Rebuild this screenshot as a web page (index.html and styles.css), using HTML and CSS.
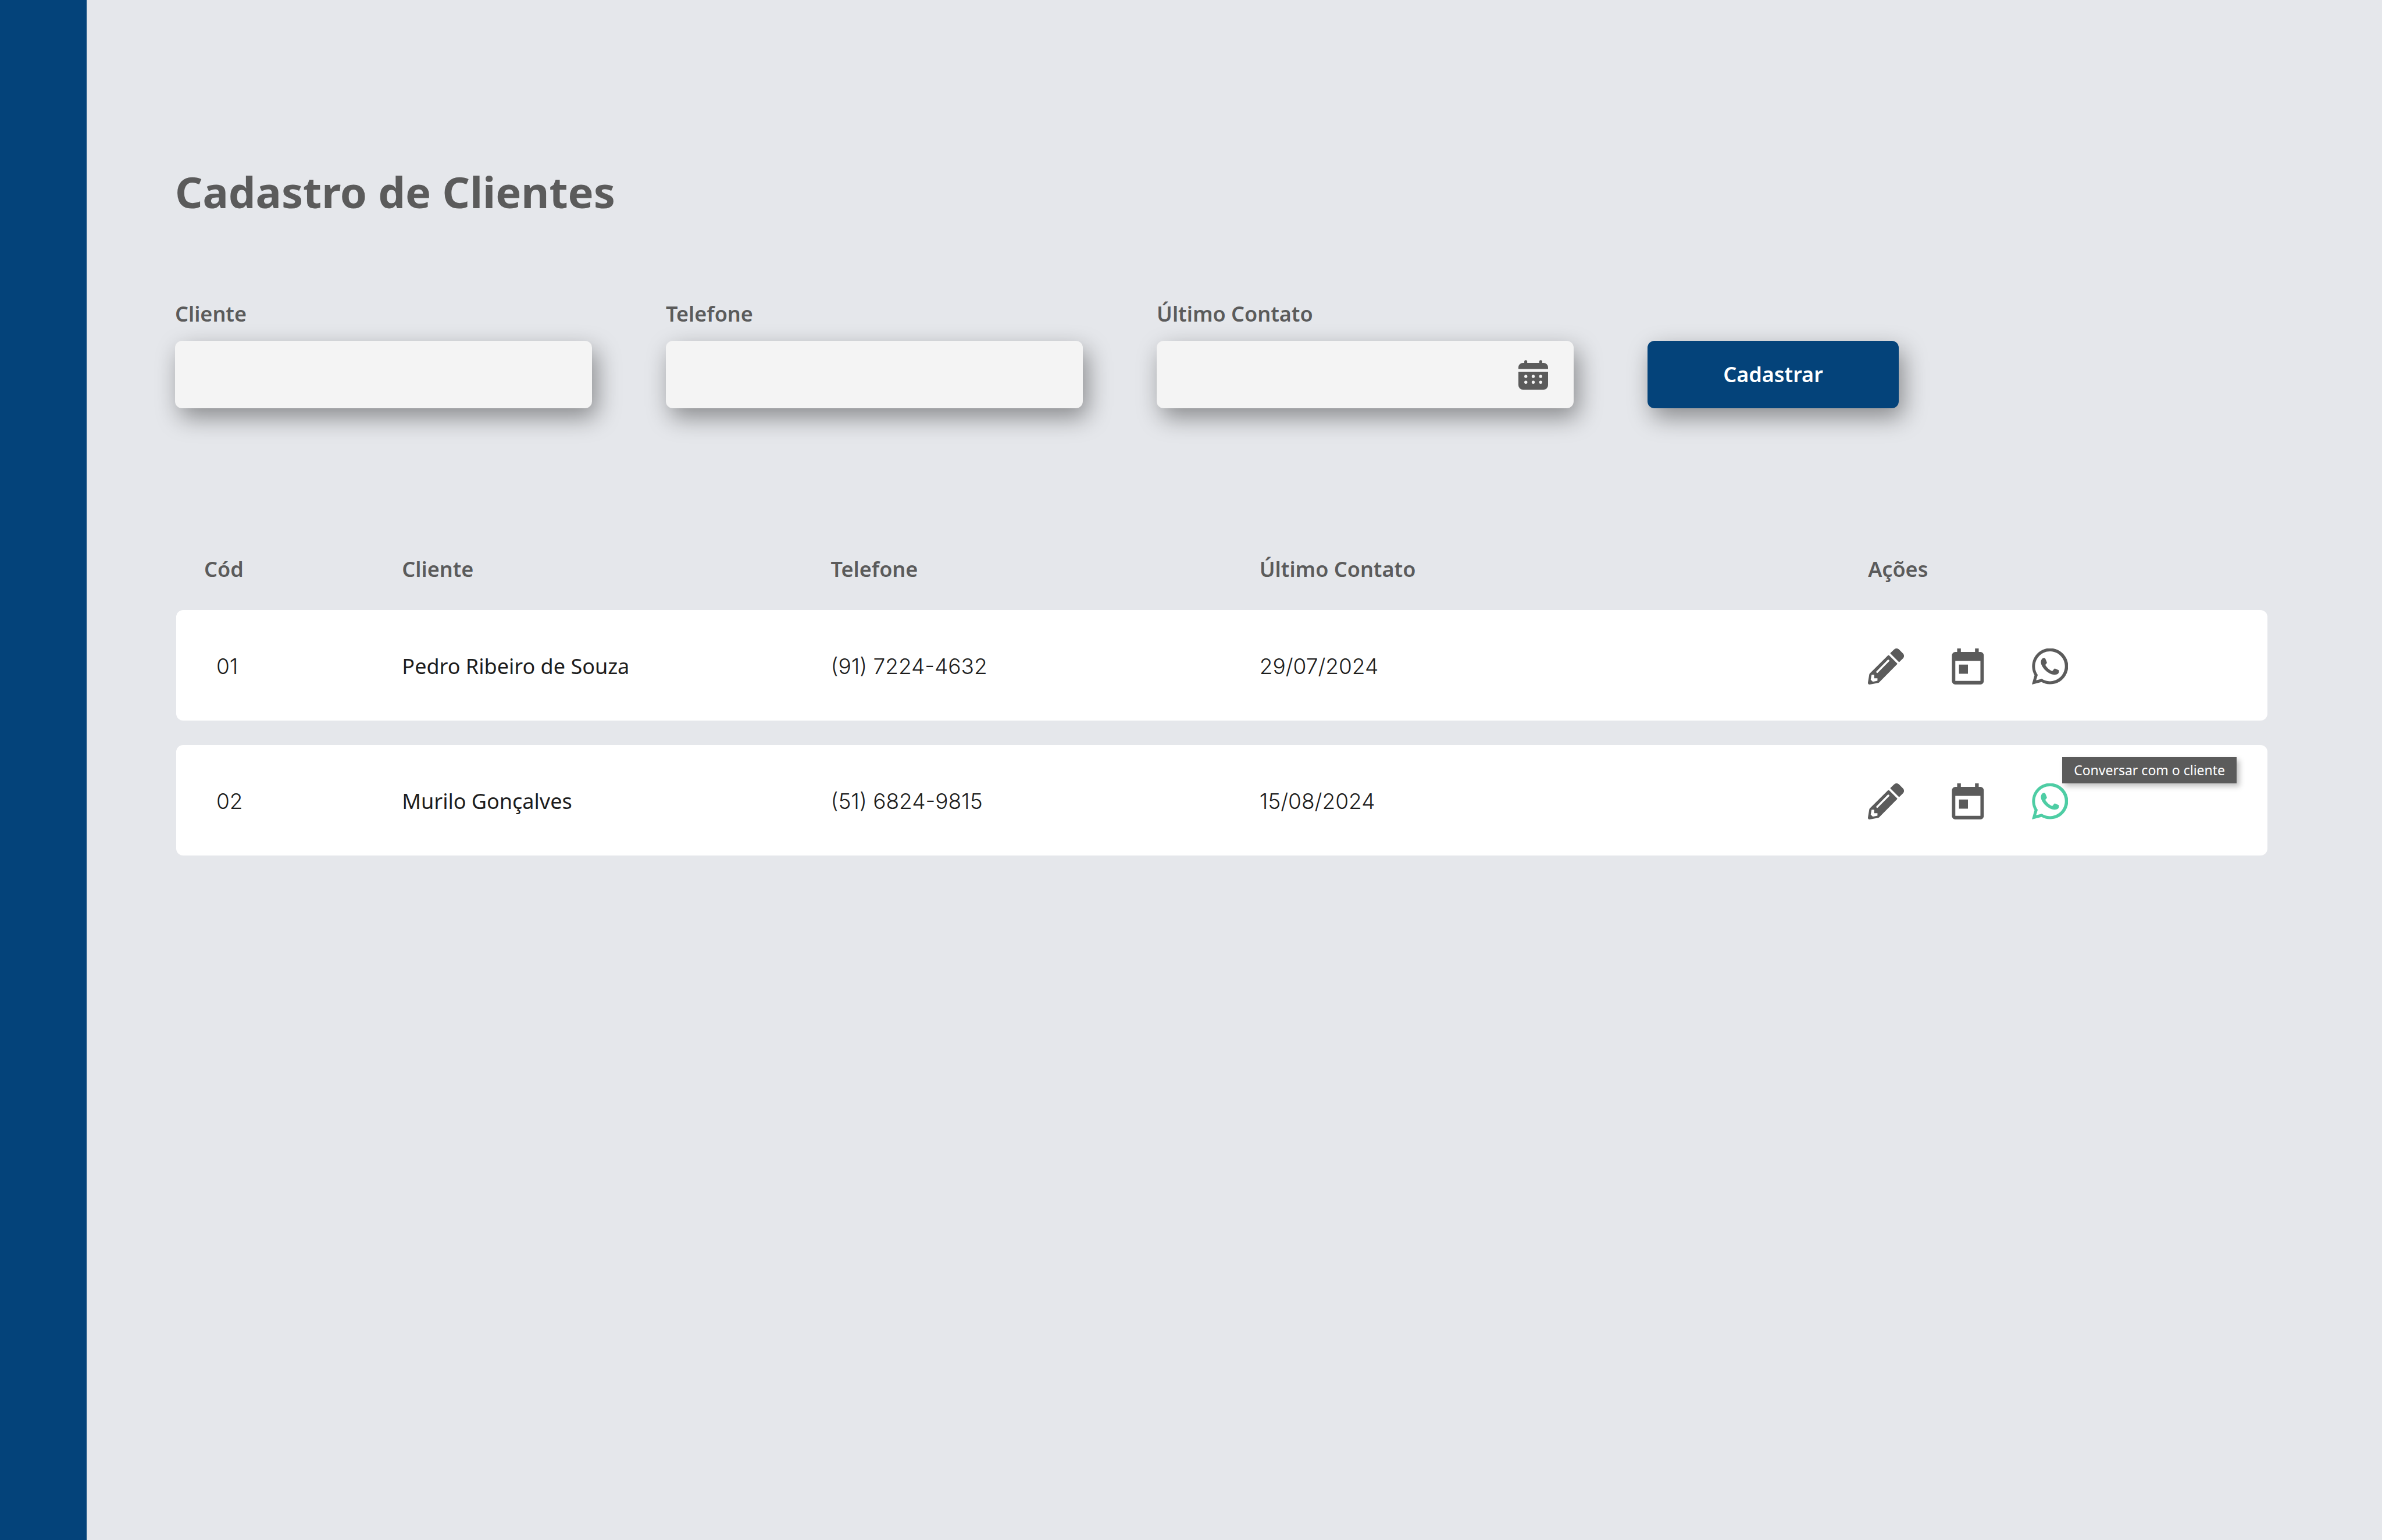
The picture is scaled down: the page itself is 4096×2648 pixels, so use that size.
FILE: index.html
```html
<!DOCTYPE html>
<html lang="pt-BR">
<head>
  <meta charset="utf-8">
  <meta name="viewport" content="width=device-width, initial-scale=1">
  <title>Cadastro de Clientes</title>
  <link rel="stylesheet" href="styles.css">
</head>
<body>
  <svg class="sprite" aria-hidden="true">
    <symbol id="icon-edit" viewBox="0 0 234 234">
      <path d="M147 34Q144 31 147 28L170 7Q185 -7 201 6L228 33Q241 48 228 64L206 86Q203 89 199 86Z"/>
      <path fill-rule="evenodd" d="M130 45Q134 41 138 45L189 96Q192 100 189 103L76 217Q72 222 66 224L12 234Q-1 235 0 222L9 168Q10 164 14 160ZM128 75L56 148A6 6 0 0 0 65 157L137 84A6 6 0 0 0 128 75ZM24 171L18 203L32 216L62 209L62 193L41 193L41 171Z"/>
    </symbol>
    <symbol id="icon-event" viewBox="-13 0 234 234">
      <path fill-rule="evenodd" d="M34 0H58V23H150V0H174V23H185A22 22 0 0 1 207 45V212A22 22 0 0 1 185 234H22A22 22 0 0 1 0 212V45A22 22 0 0 1 22 23H34ZM22 81V210H185V81ZM46 105H104V164H46Z"/>
    </symbol>
    <symbol id="icon-whatsapp" viewBox="0 0 234 234">
      <path fill-rule="evenodd" d="M0 234L17 174A117 117 0 1 1 62 218ZM27 207L64 197A97 97 0 1 0 38 172Z"/>
      <path d="M71 63Q58 72 58 90Q60 112 82 137Q112 168 146 171Q176 170 176 146Q176 143 173 141L150 130Q147 129 145 132L134 145Q132 147 129 146Q104 134 88 109Q87 106 89 104L96 96Q98 93 97 90L87 66Q86 62 82 62Q75 61 71 63Z"/>
    </symbol>
    <symbol id="icon-calendar" viewBox="0 0 192 192">
      <path d="M38 19V10A9 9 0 0 1 57 10V19H135V10A9 9 0 0 1 154 10V19H163A29 29 0 0 1 192 48V58H0V48A29 29 0 0 1 29 19Z"/>
      <path fill-rule="evenodd" d="M0 77H192V163A29 29 0 0 1 163 192H29A29 29 0 0 1 0 163ZM38 106a10 10 0 1 0 20 0a10 10 0 1 0 -20 0ZM86 106a10 10 0 1 0 20 0a10 10 0 1 0 -20 0ZM134 106a10 10 0 1 0 20 0a10 10 0 1 0 -20 0ZM38 144a10 10 0 1 0 20 0a10 10 0 1 0 -20 0ZM86 144a10 10 0 1 0 20 0a10 10 0 1 0 -20 0ZM134 144a10 10 0 1 0 20 0a10 10 0 1 0 -20 0Z"/>
    </symbol>
  </svg>

  <div class="app">
    <aside class="sidebar"></aside>
    <main class="content">
      <h1 class="title">Cadastro de Clientes</h1>

      <form class="form">
        <div class="field">
          <label class="label" for="cliente">Cliente</label>
          <input class="input" id="cliente" type="text">
        </div>
        <div class="field">
          <label class="label" for="telefone">Telefone</label>
          <input class="input" id="telefone" type="tel">
        </div>
        <div class="field">
          <label class="label" for="contato">Último Contato</label>
          <div class="input date">
            <input class="date-input" id="contato" type="text">
            <button class="date-button" type="button" aria-label="Abrir calendário"><svg class="date-icon"><use href="#icon-calendar"/></svg></button>
          </div>
        </div>
        <button class="submit" type="submit">Cadastrar</button>
      </form>

      <table class="clients">
        <colgroup>
          <col class="col-code">
          <col class="col-client">
          <col class="col-phone">
          <col class="col-contact">
          <col>
        </colgroup>
        <thead>
          <tr>
            <th class="code-head" scope="col">Cód</th>
            <th scope="col">Cliente</th>
            <th scope="col">Telefone</th>
            <th scope="col">Último Contato</th>
            <th scope="col">Ações</th>
          </tr>
        </thead>
        <tbody>
          <tr>
            <td class="code">01</td>
            <td>Pedro Ribeiro de Souza</td>
            <td class="number">(91) 7224-4632</td>
            <td class="number">29/07/2024</td>
            <td>
              <div class="actions">
                <button class="action" type="button" aria-label="Editar"><svg class="icon"><use href="#icon-edit"/></svg></button>
                <button class="action" type="button" aria-label="Agendar"><svg class="icon"><use href="#icon-event"/></svg></button>
                <button class="action" type="button" aria-label="Conversar"><svg class="icon"><use href="#icon-whatsapp"/></svg></button>
              </div>
            </td>
          </tr>
          <tr>
            <td class="code">02</td>
            <td>Murilo Gonçalves</td>
            <td class="number">(51) 6824-9815</td>
            <td class="number">15/08/2024</td>
            <td>
              <div class="actions">
                <button class="action" type="button" aria-label="Editar"><svg class="icon"><use href="#icon-edit"/></svg></button>
                <button class="action" type="button" aria-label="Agendar"><svg class="icon"><use href="#icon-event"/></svg></button>
                <button class="action action-active" type="button" aria-describedby="chat-tip"><svg class="icon"><use href="#icon-whatsapp"/></svg><span class="tooltip" id="chat-tip" role="tooltip">Conversar com o cliente</span></button>
              </div>
            </td>
          </tr>
        </tbody>
      </table>
    </main>
  </div>
</body>
</html>
```
FILE: styles.css
```css
:root {
  --brand: #04437a;
  --page: #e5e7eb;
  --ink: #1d1d1d;
  --muted: #5b5b5b;
  --accent: #4ecda4;
  --field: #f4f4f4;
  --lift: 8px 16px 40px rgba(0, 0, 0, 0.4);
}

* {
  box-sizing: border-box;
}

body {
  margin: 0;
  background: var(--page);
  color: var(--ink);
  font-family: "Noto Sans", "Open Sans", sans-serif;
  font-size: 36px;
  line-height: 44px;
}

button,
input {
  font: inherit;
  color: inherit;
}

button {
  padding: 0;
  border: 0;
  background: none;
  cursor: pointer;
}

svg {
  display: block;
  fill: currentColor;
}

.sprite {
  display: none;
}

.app {
  display: grid;
  grid-template-columns: 149px 1fr;
  min-height: 100vh;
}

.sidebar {
  background: var(--brand);
}

.content {
  padding: 286px 197px 96px 152px;
}

.title {
  margin: 0 0 144px;
  color: var(--muted);
  font-size: 74px;
  font-weight: 700;
  line-height: 88px;
}

.form {
  display: grid;
  grid-template-columns: repeat(3, minmax(0, 717px)) minmax(0, 432px);
  gap: 127px;
  align-items: end;
}

.field {
  display: grid;
  grid-template-columns: minmax(0, 1fr);
  gap: 24px;
}

.label {
  color: var(--muted);
  font-weight: 600;
}

.input {
  width: 100%;
  height: 116px;
  padding: 0 44px;
  border: 0;
  border-radius: 12px;
  background: var(--field);
  box-shadow: var(--lift);
}

.date {
  display: flex;
  align-items: center;
  gap: 24px;
}

.date-input {
  flex: 1;
  min-width: 0;
  border: 0;
  background: none;
}

.date-button {
  color: var(--muted);
}

.date-icon {
  width: 51px;
  height: 51px;
}

.submit {
  height: 116px;
  border-radius: 12px;
  background: var(--brand);
  box-shadow: var(--lift);
  color: #fff;
  font-weight: 600;
}

.clients {
  width: calc(100% - 2px);
  margin: 207px 0 0 2px;
  table-layout: fixed;
  border-collapse: separate;
  border-spacing: 0 42px;
}

.col-code {
  width: 10.8%;
}

.col-client,
.col-phone {
  width: 20.5%;
}

.col-contact {
  width: 29.1%;
}

th {
  height: 56px;
  padding: 0;
  color: var(--muted);
  font-weight: 600;
  text-align: left;
}

td {
  height: 190px;
  padding: 4px 0 0;
  background: #fff;
}

td:first-child {
  border-radius: 12px 0 0 12px;
}

td:last-child {
  border-radius: 0 12px 12px 0;
}

.code-head {
  padding-left: 48px;
}

.code {
  padding-left: 69px;
}

.code,
.number {
  font-family: Inter, "Noto Sans", sans-serif;
  font-size: 37px;
  font-weight: 350;
}

.actions {
  display: flex;
  gap: 79px;
}

.action {
  position: relative;
  color: var(--muted);
}

.action-active {
  color: var(--accent);
}

.icon {
  width: 62px;
  height: 62px;
}

.tooltip {
  position: absolute;
  bottom: 100%;
  left: 52px;
  padding: 0 20px;
  background: var(--muted);
  box-shadow: 5px 5px 9px rgba(0, 0, 0, 0.25);
  color: #fff;
  font-size: 23px;
  line-height: 45px;
  white-space: nowrap;
}
```
